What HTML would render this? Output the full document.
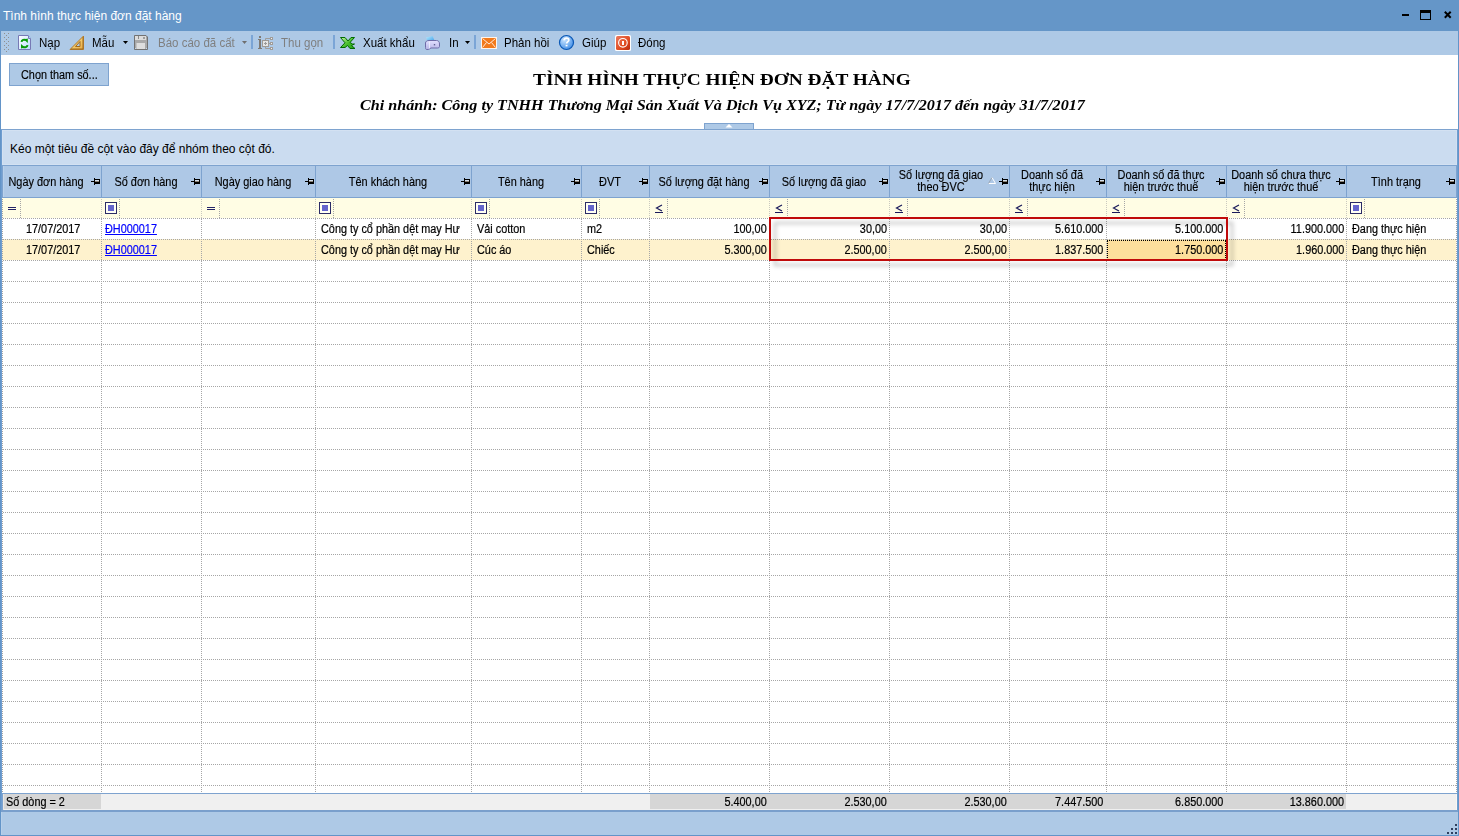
<!DOCTYPE html>
<html><head><meta charset="utf-8"><style>
*{margin:0;padding:0;box-sizing:border-box}
html,body{width:1459px;height:836px;overflow:hidden;background:#fff;font-family:"Liberation Sans",sans-serif;color:#000}
.ab{position:absolute}
.t{position:absolute;white-space:nowrap;line-height:1}
.hd{position:absolute;top:5px;height:0}
.dh{position:absolute;height:1px;background:repeating-linear-gradient(90deg,transparent 0 1px,#a6a6a6 1px 2px)}
.dv{position:absolute;width:1px;background:repeating-linear-gradient(180deg,transparent 0 1px,#a6a6a6 1px 2px)}
</style></head><body>

<div class="ab" style="left:0;top:0;width:1459px;height:31px;background:#6596c8"></div>
<div class="t" style="left:3px;top:10px;font-size:12px;color:#fff">Tình hình thực hiện đơn đặt hàng</div>
<div class="ab" style="left:1402px;top:14px;width:7px;height:2px;background:#000"></div>
<div class="ab" style="left:1420px;top:10px;width:11px;height:10px;border:1px solid #000;border-top-width:3px"></div>
<svg class="ab" style="left:1443px;top:10px" width="10" height="10" viewBox="0 0 10 10"><path d="M1.8 1.8L7.7 7.7M7.7 1.8L1.8 7.7" stroke="#000" stroke-width="2"/></svg>
<div class="ab" style="left:0;top:31px;width:1px;height:805px;background:#6394c8"></div>
<div class="ab" style="left:1458px;top:31px;width:1px;height:805px;background:#6394c8"></div>
<div class="ab" style="left:1px;top:31px;width:1457px;height:24px;background:#aec9e6"></div>
<svg class="ab" style="left:0;top:0" width="12" height="56"><rect x="4" y="33" width="1" height="1" fill="#8f8f8f"/><rect x="8" y="33" width="1" height="1" fill="#8f8f8f"/><rect x="6" y="35" width="1" height="1" fill="#8f8f8f"/><rect x="4" y="37" width="1" height="1" fill="#8f8f8f"/><rect x="8" y="37" width="1" height="1" fill="#8f8f8f"/><rect x="6" y="39" width="1" height="1" fill="#8f8f8f"/><rect x="4" y="41" width="1" height="1" fill="#8f8f8f"/><rect x="8" y="41" width="1" height="1" fill="#8f8f8f"/><rect x="6" y="43" width="1" height="1" fill="#8f8f8f"/><rect x="4" y="45" width="1" height="1" fill="#8f8f8f"/><rect x="8" y="45" width="1" height="1" fill="#8f8f8f"/><rect x="6" y="47" width="1" height="1" fill="#8f8f8f"/><rect x="4" y="49" width="1" height="1" fill="#8f8f8f"/><rect x="8" y="49" width="1" height="1" fill="#8f8f8f"/><rect x="6" y="51" width="1" height="1" fill="#8f8f8f"/></svg>
<div class="t" style="left:39px;top:37px;font-size:12.5px;color:#000;transform-origin:0 0;transform:scaleX(0.92)">Nạp</div>
<div class="t" style="left:92px;top:37px;font-size:12.5px;color:#000;transform-origin:0 0;transform:scaleX(0.92)">Mẫu</div>
<div class="t" style="left:158px;top:37px;font-size:12.5px;color:#7f7f7f;transform-origin:0 0;transform:scaleX(0.92)">Báo cáo đã cất</div>
<div class="t" style="left:281px;top:37px;font-size:12.5px;color:#7f7f7f;transform-origin:0 0;transform:scaleX(0.92)">Thu gọn</div>
<div class="t" style="left:363px;top:37px;font-size:12.5px;color:#000;transform-origin:0 0;transform:scaleX(0.92)">Xuất khẩu</div>
<div class="t" style="left:448.5px;top:37px;font-size:12.5px;color:#000;transform-origin:0 0;transform:scaleX(0.92)">In</div>
<div class="t" style="left:504px;top:37px;font-size:12.5px;color:#000;transform-origin:0 0;transform:scaleX(0.92)">Phản hồi</div>
<div class="t" style="left:582px;top:37px;font-size:12.5px;color:#000;transform-origin:0 0;transform:scaleX(0.92)">Giúp</div>
<div class="t" style="left:638px;top:37px;font-size:12.5px;color:#000;transform-origin:0 0;transform:scaleX(0.92)">Đóng</div>
<svg class="ab" style="left:123px;top:41px" width="5" height="3"><path d="M0 0H5L2.5 3Z" fill="#000"/></svg>
<svg class="ab" style="left:242px;top:41px" width="5" height="3"><path d="M0 0H5L2.5 3Z" fill="#6f6f6f"/></svg>
<svg class="ab" style="left:465px;top:41px" width="5" height="3"><path d="M0 0H5L2.5 3Z" fill="#000"/></svg>
<div class="ab" style="left:251px;top:35px;width:2px;height:14px;background:#7ba5d6"></div>
<div class="ab" style="left:333px;top:35px;width:2px;height:14px;background:#7ba5d6"></div>
<div class="ab" style="left:474px;top:35px;width:2px;height:14px;background:#7ba5d6"></div>
<svg class="ab" style="left:15px;top:33px" width="20" height="20" viewBox="0 0 20 20"><defs><linearGradient id="dg" x1="0" y1="0" x2="1" y2="1"><stop offset="0" stop-color="#ffffff"/><stop offset="1" stop-color="#b8dcff"/></linearGradient></defs>
<path d="M3.5 2.5H13.5V5.5H15.5V16.5H3.5Z" fill="url(#dg)" stroke="#7779b5"/><path d="M13.5 2.5L15.5 4.5" stroke="#8ab4e8"/>
<path d="M6.5 8.8C6.8 6.8 9 6.2 11 7" stroke="#089a08" stroke-width="2" fill="none"/><path d="M9 6.5L12.8 5.6L12.8 10Z" fill="#089a08"/>
<path d="M12.5 12.2C12.2 14.2 10 14.8 8 14" stroke="#089a08" stroke-width="2" fill="none"/><path d="M10 14.5L6 15.6L6 11Z" fill="#089a08"/></svg>
<svg class="ab" style="left:66px;top:33px" width="20" height="20" viewBox="0 0 20 20"><defs><linearGradient id="rg" x1="0" y1="0" x2="1" y2="1"><stop offset="0" stop-color="#fff2a0"/><stop offset="1" stop-color="#e8a840"/></linearGradient></defs>
<path d="M17.5 3L17.5 16.5L4 16.5Z" fill="url(#rg)" stroke="#b37a2a"/><path d="M14 8.5L14 13.5L9.5 13.5Z" fill="#aec9e6" stroke="#a06a20"/>
<path d="M6 16.5V15M8 16.5V15M10 16.5V15M12 16.5V15M14 16.5V15M16 16.5V15M17.5 15H16M17.5 13H16M17.5 11H16M17.5 9H16M17.5 7H16M17.5 5H16" stroke="#9c6a20" stroke-width="1"/></svg>
<svg class="ab" style="left:131px;top:33px" width="20" height="20" viewBox="0 0 20 20"><path d="M3.5 2.5H15L16.5 4V16.5H3.5Z" fill="#a9a9a9" stroke="#727272"/><rect x="4" y="3" width="11" height="4" fill="#dcdcdc"/><rect x="7" y="3" width="1" height="3" fill="#8a8a8a"/><circle cx="13" cy="5" r="1" fill="#8a8a8a"/>
<rect x="5.5" y="10" width="8.5" height="6" fill="#dedede"/><rect x="4" y="15" width="1" height="1" fill="#c0d8f0"/><rect x="15" y="15" width="1" height="1" fill="#c0d8f0"/></svg>
<svg class="ab" style="left:255px;top:33px" width="20" height="20" viewBox="0 0 20 20"><rect x="4" y="3" width="2" height="2" fill="#7f7a74"/><rect x="3" y="6" width="3" height="1" fill="#7f7a74"/><rect x="4" y="6" width="2" height="10" fill="#7f7a74"/><rect x="3" y="15" width="4" height="1" fill="#7f7a74"/>
<rect x="7.5" y="7.5" width="6" height="6" fill="#e6e6e6" stroke="#9e9a96"/><path d="M9 10.5H12M10.5 9V12" stroke="#9a9a9a"/>
<path d="M10.5 7V5.5H15.5M13.5 10.5H15.5M10.5 14V15.5H15.5" stroke="#a09c98" fill="none"/>
<rect x="15.5" y="4.5" width="2" height="2" fill="#eee" stroke="#a09c98"/><rect x="15.5" y="9.5" width="2" height="2" fill="#eee" stroke="#a09c98"/><rect x="15.5" y="14.5" width="2" height="2" fill="#eee" stroke="#a09c98"/></svg>
<svg class="ab" style="left:337px;top:33px" width="20" height="20" viewBox="0 0 20 20"><defs><linearGradient id="xg" x1="0" y1="0" x2="1" y2="1"><stop offset="0" stop-color="#c8f5a8"/><stop offset="0.5" stop-color="#4cc030"/><stop offset="1" stop-color="#1a9a10"/></linearGradient></defs>
<path d="M3.5 4.5H8L11 8L14 4.5H17.5L13 9.5L15.5 11H17.5L14.5 12.5L18 15.5H13L10.5 12.5L8 14.5H3.5L8 9.8Z" fill="url(#xg)" stroke="#006a00" stroke-width="1"/></svg>
<svg class="ab" style="left:422px;top:33px" width="20" height="20" viewBox="0 0 20 20"><defs><linearGradient id="pg" x1="0" y1="0" x2="1" y2="1"><stop offset="0" stop-color="#b8ecff"/><stop offset="1" stop-color="#3c9ce8"/></linearGradient><linearGradient id="bg2" x1="0" y1="0" x2="0" y2="1"><stop offset="0" stop-color="#e2e0ff"/><stop offset="1" stop-color="#b6b4e6"/></linearGradient></defs>
<path d="M4 4.5L10.5 3L12.5 7.5L5.5 8.5Z" fill="url(#pg)"/>
<path d="M3.5 10C3.5 8.5 5 7.5 7 7.5H14.5C16.5 7.5 17.5 9 17.5 11V13.5C17.5 14.5 16.5 15 15.5 15H9L6.5 16.5H4.5C3.8 16.5 3.5 15.5 3.5 14.5Z" fill="url(#bg2)" stroke="#6e6ca8"/>
<path d="M7.5 8.5V15.5" stroke="#f0f0ff" stroke-width="0.8"/><rect x="11.8" y="11" width="1.4" height="1.4" fill="#606090"/></svg>
<svg class="ab" style="left:479px;top:33px" width="20" height="20" viewBox="0 0 20 20"><rect x="2" y="4" width="16" height="12" fill="#fff4ea"/><rect x="3" y="5" width="14" height="10" fill="#f27a1c"/>
<path d="M3.5 5.5L10 11L16.5 5.5M3.5 14.5L7.5 9.5M16.5 14.5L12.5 9.5" stroke="#ffe8d8" stroke-width="1" fill="none"/></svg>
<svg class="ab" style="left:556px;top:32px" width="20" height="20" viewBox="0 0 20 20"><defs><radialGradient id="hg" cx="0.35" cy="0.3" r="0.8"><stop offset="0" stop-color="#c8e4ff"/><stop offset="1" stop-color="#3a8ae6"/></radialGradient></defs>
<circle cx="10.5" cy="10.5" r="7" fill="url(#hg)" stroke="#0a58b5" stroke-width="1.2"/>
<path d="M8.2 8.3C8.2 6.8 9.3 6.2 10.5 6.2C11.8 6.2 12.8 7 12.8 8.2C12.8 9.6 10.8 9.8 10.6 11.5" stroke="#fff" stroke-width="1.7" fill="none"/><rect x="9.6" y="12.8" width="1.9" height="1.6" fill="#fff"/></svg>
<svg class="ab" style="left:612px;top:33px" width="20" height="20" viewBox="0 0 20 20"><defs><linearGradient id="cg" x1="0" y1="0" x2="1" y2="1"><stop offset="0" stop-color="#ea7a60"/><stop offset="0.6" stop-color="#e04a20"/><stop offset="1" stop-color="#b82a10"/></linearGradient></defs>
<rect x="3" y="2" width="16" height="16" rx="1.5" fill="#ffffff"/><rect x="4" y="3" width="14" height="14" rx="1.5" fill="url(#cg)"/>
<circle cx="10.9" cy="9.8" r="4.3" stroke="#fff" stroke-width="1.1" fill="none"/><rect x="10" y="8" width="2" height="4" fill="#fff"/></svg>
<div class="ab" style="left:9px;top:63px;width:100px;height:23px;background:#aec9e6;border:1px solid #7ea3cf"></div>
<div class="t" style="left:21px;top:69px;font-size:12px;transform-origin:0 0;transform:scaleX(0.905);-webkit-text-stroke:0.15px #000">Chọn tham số...</div>
<div class="t" style="left:533px;top:70.5px;font-size:17.5px;font-family:'Liberation Serif',serif;font-weight:bold;transform-origin:0 0;transform:scaleX(1.105)">TÌNH HÌNH THỰC HIỆN ĐƠN ĐẶT HÀNG</div>
<div class="t" style="left:360px;top:97px;font-size:15.5px;font-family:'Liberation Serif',serif;font-weight:bold;font-style:italic;transform-origin:0 0;transform:scaleX(1.04)">Chi nhánh: Công ty TNHH Thương Mại Sản Xuất Và Dịch Vụ XYZ; Từ ngày 17/7/2017 đến ngày 31/7/2017</div>
<div class="ab" style="left:704px;top:123px;width:50px;height:7px;background:#aec9e6;border:1px solid #7ea3cf"></div>
<svg class="ab" style="left:725px;top:124px" width="8" height="4"><path d="M0.5 3.5H7.5L4 0Z" fill="#fff"/></svg>
<div class="ab" style="left:1px;top:129px;width:1457px;height:1px;background:#7ea3cf"></div>
<div class="ab" style="left:1px;top:130px;width:1px;height:682px;background:#6f9dd0"></div>
<div class="ab" style="left:1457px;top:130px;width:1px;height:682px;background:#6f9dd0"></div>
<div class="ab" style="left:2px;top:130px;width:1455px;height:35px;background:#cbdcf0"></div>
<div class="ab" style="left:2px;top:130px;width:1455px;height:1px;background:#d3e1f2"></div>
<div class="ab" style="left:2px;top:164px;width:1455px;height:1px;background:#d3e1f2"></div>
<div class="ab" style="left:2px;top:130px;width:1px;height:35px;background:#d3e1f2"></div>
<div class="ab" style="left:1456px;top:130px;width:1px;height:35px;background:#d3e1f2"></div>
<div class="t" style="left:10px;top:143px;font-size:12px">Kéo một tiêu đề cột vào đây để nhóm theo cột đó.</div>
<div class="ab" style="left:2px;top:165px;width:1455px;height:33px;background:#aec8e6;border-top:1px solid #7ea3cf;border-bottom:1px solid #7ea3cf;border-left:1px solid #7ea3cf"></div>
<div class="ab" style="left:3px;top:166px;width:1px;height:31px;background:#b9d1eb"></div>
<div class="ab" style="left:101px;top:166px;width:1px;height:31px;background:#7ea3cf"></div>
<div class="t" style="left:-54.5px;width:200px;text-align:center;top:176px;font-size:12px;transform-origin:50% 0;transform:scaleX(0.91);-webkit-text-stroke:0.15px #000">Ngày đơn hàng</div>
<svg class="ab" style="left:91px;top:178px" width="9" height="7"><rect x="0" y="3" width="3" height="1" fill="#000"/><rect x="3" y="0" width="1" height="7" fill="#000"/><rect x="4" y="1" width="5" height="1" fill="#000"/><rect x="8" y="1" width="1" height="5" fill="#000"/><rect x="4" y="4" width="5" height="2" fill="#000"/><rect x="4" y="2" width="4" height="1" fill="#d4e0ee"/><rect x="4" y="3" width="4" height="1" fill="#8c8478"/></svg>
<div class="ab" style="left:201px;top:166px;width:1px;height:31px;background:#7ea3cf"></div>
<div class="t" style="left:45.5px;width:200px;text-align:center;top:176px;font-size:12px;transform-origin:50% 0;transform:scaleX(0.91);-webkit-text-stroke:0.15px #000">Số đơn hàng</div>
<svg class="ab" style="left:191px;top:178px" width="9" height="7"><rect x="0" y="3" width="3" height="1" fill="#000"/><rect x="3" y="0" width="1" height="7" fill="#000"/><rect x="4" y="1" width="5" height="1" fill="#000"/><rect x="8" y="1" width="1" height="5" fill="#000"/><rect x="4" y="4" width="5" height="2" fill="#000"/><rect x="4" y="2" width="4" height="1" fill="#d4e0ee"/><rect x="4" y="3" width="4" height="1" fill="#8c8478"/></svg>
<div class="ab" style="left:315px;top:166px;width:1px;height:31px;background:#7ea3cf"></div>
<div class="t" style="left:152.5px;width:200px;text-align:center;top:176px;font-size:12px;transform-origin:50% 0;transform:scaleX(0.91);-webkit-text-stroke:0.15px #000">Ngày giao hàng</div>
<svg class="ab" style="left:305px;top:178px" width="9" height="7"><rect x="0" y="3" width="3" height="1" fill="#000"/><rect x="3" y="0" width="1" height="7" fill="#000"/><rect x="4" y="1" width="5" height="1" fill="#000"/><rect x="8" y="1" width="1" height="5" fill="#000"/><rect x="4" y="4" width="5" height="2" fill="#000"/><rect x="4" y="2" width="4" height="1" fill="#d4e0ee"/><rect x="4" y="3" width="4" height="1" fill="#8c8478"/></svg>
<div class="ab" style="left:471px;top:166px;width:1px;height:31px;background:#7ea3cf"></div>
<div class="t" style="left:287.5px;width:200px;text-align:center;top:176px;font-size:12px;transform-origin:50% 0;transform:scaleX(0.91);-webkit-text-stroke:0.15px #000">Tên khách hàng</div>
<svg class="ab" style="left:461px;top:178px" width="9" height="7"><rect x="0" y="3" width="3" height="1" fill="#000"/><rect x="3" y="0" width="1" height="7" fill="#000"/><rect x="4" y="1" width="5" height="1" fill="#000"/><rect x="8" y="1" width="1" height="5" fill="#000"/><rect x="4" y="4" width="5" height="2" fill="#000"/><rect x="4" y="2" width="4" height="1" fill="#d4e0ee"/><rect x="4" y="3" width="4" height="1" fill="#8c8478"/></svg>
<div class="ab" style="left:581px;top:166px;width:1px;height:31px;background:#7ea3cf"></div>
<div class="t" style="left:420.5px;width:200px;text-align:center;top:176px;font-size:12px;transform-origin:50% 0;transform:scaleX(0.91);-webkit-text-stroke:0.15px #000">Tên hàng</div>
<svg class="ab" style="left:571px;top:178px" width="9" height="7"><rect x="0" y="3" width="3" height="1" fill="#000"/><rect x="3" y="0" width="1" height="7" fill="#000"/><rect x="4" y="1" width="5" height="1" fill="#000"/><rect x="8" y="1" width="1" height="5" fill="#000"/><rect x="4" y="4" width="5" height="2" fill="#000"/><rect x="4" y="2" width="4" height="1" fill="#d4e0ee"/><rect x="4" y="3" width="4" height="1" fill="#8c8478"/></svg>
<div class="ab" style="left:649px;top:166px;width:1px;height:31px;background:#7ea3cf"></div>
<div class="t" style="left:509.5px;width:200px;text-align:center;top:176px;font-size:12px;transform-origin:50% 0;transform:scaleX(0.91);-webkit-text-stroke:0.15px #000">ĐVT</div>
<svg class="ab" style="left:639px;top:178px" width="9" height="7"><rect x="0" y="3" width="3" height="1" fill="#000"/><rect x="3" y="0" width="1" height="7" fill="#000"/><rect x="4" y="1" width="5" height="1" fill="#000"/><rect x="8" y="1" width="1" height="5" fill="#000"/><rect x="4" y="4" width="5" height="2" fill="#000"/><rect x="4" y="2" width="4" height="1" fill="#d4e0ee"/><rect x="4" y="3" width="4" height="1" fill="#8c8478"/></svg>
<div class="ab" style="left:769px;top:166px;width:1px;height:31px;background:#7ea3cf"></div>
<div class="t" style="left:603.5px;width:200px;text-align:center;top:176px;font-size:12px;transform-origin:50% 0;transform:scaleX(0.91);-webkit-text-stroke:0.15px #000">Số lượng đặt hàng</div>
<svg class="ab" style="left:759px;top:178px" width="9" height="7"><rect x="0" y="3" width="3" height="1" fill="#000"/><rect x="3" y="0" width="1" height="7" fill="#000"/><rect x="4" y="1" width="5" height="1" fill="#000"/><rect x="8" y="1" width="1" height="5" fill="#000"/><rect x="4" y="4" width="5" height="2" fill="#000"/><rect x="4" y="2" width="4" height="1" fill="#d4e0ee"/><rect x="4" y="3" width="4" height="1" fill="#8c8478"/></svg>
<div class="ab" style="left:889px;top:166px;width:1px;height:31px;background:#7ea3cf"></div>
<div class="t" style="left:723.5px;width:200px;text-align:center;top:176px;font-size:12px;transform-origin:50% 0;transform:scaleX(0.91);-webkit-text-stroke:0.15px #000">Số lượng đã giao</div>
<svg class="ab" style="left:879px;top:178px" width="9" height="7"><rect x="0" y="3" width="3" height="1" fill="#000"/><rect x="3" y="0" width="1" height="7" fill="#000"/><rect x="4" y="1" width="5" height="1" fill="#000"/><rect x="8" y="1" width="1" height="5" fill="#000"/><rect x="4" y="4" width="5" height="2" fill="#000"/><rect x="4" y="2" width="4" height="1" fill="#d4e0ee"/><rect x="4" y="3" width="4" height="1" fill="#8c8478"/></svg>
<div class="ab" style="left:1009px;top:166px;width:1px;height:31px;background:#7ea3cf"></div>
<div class="t" style="left:840.5px;width:200px;text-align:center;top:170px;font-size:12px;line-height:11.5px;transform-origin:50% 0;transform:scaleX(0.91);-webkit-text-stroke:0.15px #000">Số lượng đã giao<br>theo ĐVC</div>
<svg class="ab" style="left:999px;top:178px" width="9" height="7"><rect x="0" y="3" width="3" height="1" fill="#000"/><rect x="3" y="0" width="1" height="7" fill="#000"/><rect x="4" y="1" width="5" height="1" fill="#000"/><rect x="8" y="1" width="1" height="5" fill="#000"/><rect x="4" y="4" width="5" height="2" fill="#000"/><rect x="4" y="2" width="4" height="1" fill="#d4e0ee"/><rect x="4" y="3" width="4" height="1" fill="#8c8478"/></svg>
<div class="ab" style="left:1106px;top:166px;width:1px;height:31px;background:#7ea3cf"></div>
<div class="t" style="left:952.0px;width:200px;text-align:center;top:170px;font-size:12px;line-height:11.5px;transform-origin:50% 0;transform:scaleX(0.91);-webkit-text-stroke:0.15px #000">Doanh số đã<br>thực hiện</div>
<svg class="ab" style="left:1096px;top:178px" width="9" height="7"><rect x="0" y="3" width="3" height="1" fill="#000"/><rect x="3" y="0" width="1" height="7" fill="#000"/><rect x="4" y="1" width="5" height="1" fill="#000"/><rect x="8" y="1" width="1" height="5" fill="#000"/><rect x="4" y="4" width="5" height="2" fill="#000"/><rect x="4" y="2" width="4" height="1" fill="#d4e0ee"/><rect x="4" y="3" width="4" height="1" fill="#8c8478"/></svg>
<div class="ab" style="left:1226px;top:166px;width:1px;height:31px;background:#7ea3cf"></div>
<div class="t" style="left:1060.5px;width:200px;text-align:center;top:170px;font-size:12px;line-height:11.5px;transform-origin:50% 0;transform:scaleX(0.91);-webkit-text-stroke:0.15px #000">Doanh số đã thực<br>hiện trước thuế</div>
<svg class="ab" style="left:1216px;top:178px" width="9" height="7"><rect x="0" y="3" width="3" height="1" fill="#000"/><rect x="3" y="0" width="1" height="7" fill="#000"/><rect x="4" y="1" width="5" height="1" fill="#000"/><rect x="8" y="1" width="1" height="5" fill="#000"/><rect x="4" y="4" width="5" height="2" fill="#000"/><rect x="4" y="2" width="4" height="1" fill="#d4e0ee"/><rect x="4" y="3" width="4" height="1" fill="#8c8478"/></svg>
<div class="ab" style="left:1346px;top:166px;width:1px;height:31px;background:#7ea3cf"></div>
<div class="t" style="left:1180.5px;width:200px;text-align:center;top:170px;font-size:12px;line-height:11.5px;transform-origin:50% 0;transform:scaleX(0.91);-webkit-text-stroke:0.15px #000">Doanh số chưa thực<br>hiện trước thuế</div>
<svg class="ab" style="left:1336px;top:178px" width="9" height="7"><rect x="0" y="3" width="3" height="1" fill="#000"/><rect x="3" y="0" width="1" height="7" fill="#000"/><rect x="4" y="1" width="5" height="1" fill="#000"/><rect x="8" y="1" width="1" height="5" fill="#000"/><rect x="4" y="4" width="5" height="2" fill="#000"/><rect x="4" y="2" width="4" height="1" fill="#d4e0ee"/><rect x="4" y="3" width="4" height="1" fill="#8c8478"/></svg>
<div class="ab" style="left:1456px;top:166px;width:1px;height:31px;background:#7ea3cf"></div>
<div class="t" style="left:1295.5px;width:200px;text-align:center;top:176px;font-size:12px;transform-origin:50% 0;transform:scaleX(0.91);-webkit-text-stroke:0.15px #000">Tình trạng</div>
<svg class="ab" style="left:1446px;top:178px" width="9" height="7"><rect x="0" y="3" width="3" height="1" fill="#000"/><rect x="3" y="0" width="1" height="7" fill="#000"/><rect x="4" y="1" width="5" height="1" fill="#000"/><rect x="8" y="1" width="1" height="5" fill="#000"/><rect x="4" y="4" width="5" height="2" fill="#000"/><rect x="4" y="2" width="4" height="1" fill="#d4e0ee"/><rect x="4" y="3" width="4" height="1" fill="#8c8478"/></svg>
<svg class="ab" style="left:988px;top:177px" width="9" height="7"><path d="M4 0.5L7.5 6.5H0.5" fill="none" stroke="#fff"/><path d="M4 0.5L0.5 6.5" fill="none" stroke="#9aa6b4"/></svg>
<div class="ab" style="left:2px;top:198px;width:1454px;height:20px;background:#fffde4"></div>
<div class="dv" style="left:20px;top:198px;height:20px"></div>
<div class="ab" style="left:8px;top:207px;width:8px;height:1px;background:#232366"></div><div class="ab" style="left:8px;top:209px;width:8px;height:1px;background:#232366"></div>
<div class="dv" style="left:101px;top:198px;height:20px;opacity:.6"></div>
<div class="dv" style="left:119px;top:198px;height:20px"></div>
<div class="ab" style="left:105px;top:202px;width:12px;height:12px;border:1px solid #2b2b66;background:#fffff4"></div><div class="ab" style="left:108px;top:205px;width:6px;height:6px;background:#6565cc"></div>
<div class="dv" style="left:201px;top:198px;height:20px;opacity:.6"></div>
<div class="dv" style="left:219px;top:198px;height:20px"></div>
<div class="ab" style="left:207px;top:207px;width:8px;height:1px;background:#232366"></div><div class="ab" style="left:207px;top:209px;width:8px;height:1px;background:#232366"></div>
<div class="dv" style="left:315px;top:198px;height:20px;opacity:.6"></div>
<div class="dv" style="left:333px;top:198px;height:20px"></div>
<div class="ab" style="left:319px;top:202px;width:12px;height:12px;border:1px solid #2b2b66;background:#fffff4"></div><div class="ab" style="left:322px;top:205px;width:6px;height:6px;background:#6565cc"></div>
<div class="dv" style="left:471px;top:198px;height:20px;opacity:.6"></div>
<div class="dv" style="left:489px;top:198px;height:20px"></div>
<div class="ab" style="left:475px;top:202px;width:12px;height:12px;border:1px solid #2b2b66;background:#fffff4"></div><div class="ab" style="left:478px;top:205px;width:6px;height:6px;background:#6565cc"></div>
<div class="dv" style="left:581px;top:198px;height:20px;opacity:.6"></div>
<div class="dv" style="left:599px;top:198px;height:20px"></div>
<div class="ab" style="left:585px;top:202px;width:12px;height:12px;border:1px solid #2b2b66;background:#fffff4"></div><div class="ab" style="left:588px;top:205px;width:6px;height:6px;background:#6565cc"></div>
<div class="dv" style="left:649px;top:198px;height:20px;opacity:.6"></div>
<div class="dv" style="left:667px;top:198px;height:20px"></div>
<svg class="ab" style="left:655px;top:204px" width="9" height="10"><path d="M7 1L1.5 4L7 7" stroke="#1a1a5a" stroke-width="1.2" fill="none"/><rect x="0" y="8" width="8" height="1" fill="#1a1a5a"/></svg>
<div class="dv" style="left:769px;top:198px;height:20px;opacity:.6"></div>
<div class="dv" style="left:787px;top:198px;height:20px"></div>
<svg class="ab" style="left:775px;top:204px" width="9" height="10"><path d="M7 1L1.5 4L7 7" stroke="#1a1a5a" stroke-width="1.2" fill="none"/><rect x="0" y="8" width="8" height="1" fill="#1a1a5a"/></svg>
<div class="dv" style="left:889px;top:198px;height:20px;opacity:.6"></div>
<div class="dv" style="left:907px;top:198px;height:20px"></div>
<svg class="ab" style="left:895px;top:204px" width="9" height="10"><path d="M7 1L1.5 4L7 7" stroke="#1a1a5a" stroke-width="1.2" fill="none"/><rect x="0" y="8" width="8" height="1" fill="#1a1a5a"/></svg>
<div class="dv" style="left:1009px;top:198px;height:20px;opacity:.6"></div>
<div class="dv" style="left:1027px;top:198px;height:20px"></div>
<svg class="ab" style="left:1015px;top:204px" width="9" height="10"><path d="M7 1L1.5 4L7 7" stroke="#1a1a5a" stroke-width="1.2" fill="none"/><rect x="0" y="8" width="8" height="1" fill="#1a1a5a"/></svg>
<div class="dv" style="left:1106px;top:198px;height:20px;opacity:.6"></div>
<div class="dv" style="left:1124px;top:198px;height:20px"></div>
<svg class="ab" style="left:1112px;top:204px" width="9" height="10"><path d="M7 1L1.5 4L7 7" stroke="#1a1a5a" stroke-width="1.2" fill="none"/><rect x="0" y="8" width="8" height="1" fill="#1a1a5a"/></svg>
<div class="dv" style="left:1226px;top:198px;height:20px;opacity:.6"></div>
<div class="dv" style="left:1244px;top:198px;height:20px"></div>
<svg class="ab" style="left:1232px;top:204px" width="9" height="10"><path d="M7 1L1.5 4L7 7" stroke="#1a1a5a" stroke-width="1.2" fill="none"/><rect x="0" y="8" width="8" height="1" fill="#1a1a5a"/></svg>
<div class="dv" style="left:1346px;top:198px;height:20px;opacity:.6"></div>
<div class="dv" style="left:1364px;top:198px;height:20px"></div>
<div class="ab" style="left:1350px;top:202px;width:12px;height:12px;border:1px solid #2b2b66;background:#fffff4"></div><div class="ab" style="left:1353px;top:205px;width:6px;height:6px;background:#6565cc"></div>
<div class="ab" style="left:2px;top:239px;width:1454px;height:21px;background:#fef2cd"></div>
<div class="dv" style="left:2px;top:198px;height:595px"></div>
<div class="dv" style="left:1456px;top:198px;height:595px"></div>
<div class="dh" style="left:2px;top:218px;width:1454px"></div>
<div class="dh" style="left:2px;top:239px;width:1454px"></div>
<div class="dh" style="left:2px;top:260px;width:1454px"></div>
<div class="dh" style="left:2px;top:281px;width:1454px"></div>
<div class="dh" style="left:2px;top:302px;width:1454px"></div>
<div class="dh" style="left:2px;top:323px;width:1454px"></div>
<div class="dh" style="left:2px;top:344px;width:1454px"></div>
<div class="dh" style="left:2px;top:365px;width:1454px"></div>
<div class="dh" style="left:2px;top:386px;width:1454px"></div>
<div class="dh" style="left:2px;top:407px;width:1454px"></div>
<div class="dh" style="left:2px;top:428px;width:1454px"></div>
<div class="dh" style="left:2px;top:449px;width:1454px"></div>
<div class="dh" style="left:2px;top:470px;width:1454px"></div>
<div class="dh" style="left:2px;top:491px;width:1454px"></div>
<div class="dh" style="left:2px;top:512px;width:1454px"></div>
<div class="dh" style="left:2px;top:533px;width:1454px"></div>
<div class="dh" style="left:2px;top:554px;width:1454px"></div>
<div class="dh" style="left:2px;top:575px;width:1454px"></div>
<div class="dh" style="left:2px;top:596px;width:1454px"></div>
<div class="dh" style="left:2px;top:617px;width:1454px"></div>
<div class="dh" style="left:2px;top:638px;width:1454px"></div>
<div class="dh" style="left:2px;top:659px;width:1454px"></div>
<div class="dh" style="left:2px;top:680px;width:1454px"></div>
<div class="dh" style="left:2px;top:701px;width:1454px"></div>
<div class="dh" style="left:2px;top:722px;width:1454px"></div>
<div class="dh" style="left:2px;top:743px;width:1454px"></div>
<div class="dh" style="left:2px;top:764px;width:1454px"></div>
<div class="dh" style="left:2px;top:785px;width:1454px"></div>
<div class="dv" style="left:101px;top:218px;height:575px"></div>
<div class="dv" style="left:201px;top:218px;height:575px"></div>
<div class="dv" style="left:315px;top:218px;height:575px"></div>
<div class="dv" style="left:471px;top:218px;height:575px"></div>
<div class="dv" style="left:581px;top:218px;height:575px"></div>
<div class="dv" style="left:649px;top:218px;height:575px"></div>
<div class="dv" style="left:769px;top:218px;height:575px"></div>
<div class="dv" style="left:889px;top:218px;height:575px"></div>
<div class="dv" style="left:1009px;top:218px;height:575px"></div>
<div class="dv" style="left:1106px;top:218px;height:575px"></div>
<div class="dv" style="left:1226px;top:218px;height:575px"></div>
<div class="dv" style="left:1346px;top:218px;height:575px"></div>
<div class="ab" style="left:1107px;top:240px;width:119px;height:20px;background:#fddf9c;border:1px dotted #000"></div>
<div class="t" style="left:26px;top:223px;font-size:12px;color:#000;transform-origin:0 0;transform:scaleX(0.905);-webkit-text-stroke:0.2px #000;">17/07/2017</div>
<div class="t" style="left:105px;top:223px;font-size:12px;color:#0000ff;transform-origin:0 0;transform:scaleX(0.905);-webkit-text-stroke:0.2px #0000ff;text-decoration:underline">ĐH000017</div>
<div class="t" style="left:321px;top:223px;font-size:12px;color:#000;transform-origin:0 0;transform:scaleX(0.905);-webkit-text-stroke:0.2px #000;">Công ty cổ phần dệt may Hư</div>
<div class="t" style="left:477px;top:223px;font-size:12px;color:#000;transform-origin:0 0;transform:scaleX(0.905);-webkit-text-stroke:0.2px #000;">Vải cotton</div>
<div class="t" style="left:587px;top:223px;font-size:12px;color:#000;transform-origin:0 0;transform:scaleX(0.905);-webkit-text-stroke:0.2px #000;">m2</div>
<div class="t" style="right:692px;top:223px;font-size:12px;color:#000;transform-origin:100% 0;transform:scaleX(0.905);-webkit-text-stroke:0.2px #000;">100,00</div>
<div class="t" style="right:572px;top:223px;font-size:12px;color:#000;transform-origin:100% 0;transform:scaleX(0.905);-webkit-text-stroke:0.2px #000;">30,00</div>
<div class="t" style="right:452px;top:223px;font-size:12px;color:#000;transform-origin:100% 0;transform:scaleX(0.905);-webkit-text-stroke:0.2px #000;">30,00</div>
<div class="t" style="right:356px;top:223px;font-size:12px;color:#000;transform-origin:100% 0;transform:scaleX(0.905);-webkit-text-stroke:0.2px #000;">5.610.000</div>
<div class="t" style="right:236px;top:223px;font-size:12px;color:#000;transform-origin:100% 0;transform:scaleX(0.905);-webkit-text-stroke:0.2px #000;">5.100.000</div>
<div class="t" style="right:115px;top:223px;font-size:12px;color:#000;transform-origin:100% 0;transform:scaleX(0.905);-webkit-text-stroke:0.2px #000;">11.900.000</div>
<div class="t" style="left:1352px;top:223px;font-size:12px;color:#000;transform-origin:0 0;transform:scaleX(0.905);-webkit-text-stroke:0.2px #000;">Đang thực hiện</div>
<div class="t" style="left:26px;top:244px;font-size:12px;color:#000;transform-origin:0 0;transform:scaleX(0.905);-webkit-text-stroke:0.2px #000;">17/07/2017</div>
<div class="t" style="left:105px;top:244px;font-size:12px;color:#0000ff;transform-origin:0 0;transform:scaleX(0.905);-webkit-text-stroke:0.2px #0000ff;text-decoration:underline">ĐH000017</div>
<div class="t" style="left:321px;top:244px;font-size:12px;color:#000;transform-origin:0 0;transform:scaleX(0.905);-webkit-text-stroke:0.2px #000;">Công ty cổ phần dệt may Hư</div>
<div class="t" style="left:477px;top:244px;font-size:12px;color:#000;transform-origin:0 0;transform:scaleX(0.905);-webkit-text-stroke:0.2px #000;">Cúc áo</div>
<div class="t" style="left:587px;top:244px;font-size:12px;color:#000;transform-origin:0 0;transform:scaleX(0.905);-webkit-text-stroke:0.2px #000;">Chiếc</div>
<div class="t" style="right:692px;top:244px;font-size:12px;color:#000;transform-origin:100% 0;transform:scaleX(0.905);-webkit-text-stroke:0.2px #000;">5.300,00</div>
<div class="t" style="right:572px;top:244px;font-size:12px;color:#000;transform-origin:100% 0;transform:scaleX(0.905);-webkit-text-stroke:0.2px #000;">2.500,00</div>
<div class="t" style="right:452px;top:244px;font-size:12px;color:#000;transform-origin:100% 0;transform:scaleX(0.905);-webkit-text-stroke:0.2px #000;">2.500,00</div>
<div class="t" style="right:356px;top:244px;font-size:12px;color:#000;transform-origin:100% 0;transform:scaleX(0.905);-webkit-text-stroke:0.2px #000;">1.837.500</div>
<div class="t" style="right:236px;top:244px;font-size:12px;color:#000;transform-origin:100% 0;transform:scaleX(0.905);-webkit-text-stroke:0.2px #000;">1.750.000</div>
<div class="t" style="right:115px;top:244px;font-size:12px;color:#000;transform-origin:100% 0;transform:scaleX(0.905);-webkit-text-stroke:0.2px #000;">1.960.000</div>
<div class="t" style="left:1352px;top:244px;font-size:12px;color:#000;transform-origin:0 0;transform:scaleX(0.905);-webkit-text-stroke:0.2px #000;">Đang thực hiện</div>
<div class="ab" style="left:774px;top:222px;width:459px;height:44px;border:2.5px solid rgba(0,0,0,.28);filter:blur(2.2px)"></div>
<div class="ab" style="left:769px;top:217px;width:459px;height:44px;border:2px solid #c00a0a"></div>
<div class="ab" style="left:2px;top:793px;width:1455px;height:1px;background:#7ea3cf"></div>
<div class="ab" style="left:2px;top:794px;width:1455px;height:16px;background:#f0f0f0"></div>
<div class="ab" style="left:2px;top:794px;width:1px;height:16px;background:#7ea3cf"></div>
<div class="ab" style="left:3px;top:794px;width:1px;height:16px;background:#ebe7e2"></div>
<div class="ab" style="left:1456px;top:794px;width:1px;height:16px;background:#fbf8f2"></div>
<div class="ab" style="left:4px;top:794px;width:97px;height:15px;background:#d6d6d6"></div>
<div class="ab" style="left:650px;top:794px;width:696px;height:15px;background:#d6d6d6"></div>
<div class="t" style="left:6px;top:796px;font-size:12px;color:#000;transform-origin:0 0;transform:scaleX(0.905);-webkit-text-stroke:0.2px #000;">Số dòng = 2</div>
<div class="t" style="right:692px;top:796px;font-size:12px;color:#000;transform-origin:100% 0;transform:scaleX(0.905);-webkit-text-stroke:0.2px #000;">5.400,00</div>
<div class="t" style="right:572px;top:796px;font-size:12px;color:#000;transform-origin:100% 0;transform:scaleX(0.905);-webkit-text-stroke:0.2px #000;">2.530,00</div>
<div class="t" style="right:452px;top:796px;font-size:12px;color:#000;transform-origin:100% 0;transform:scaleX(0.905);-webkit-text-stroke:0.2px #000;">2.530,00</div>
<div class="t" style="right:356px;top:796px;font-size:12px;color:#000;transform-origin:100% 0;transform:scaleX(0.905);-webkit-text-stroke:0.2px #000;">7.447.500</div>
<div class="t" style="right:236px;top:796px;font-size:12px;color:#000;transform-origin:100% 0;transform:scaleX(0.905);-webkit-text-stroke:0.2px #000;">6.850.000</div>
<div class="t" style="right:115px;top:796px;font-size:12px;color:#000;transform-origin:100% 0;transform:scaleX(0.905);-webkit-text-stroke:0.2px #000;">13.860.000</div>
<div class="ab" style="left:1px;top:810px;width:1457px;height:2px;background:#7a9fcc"></div>
<div class="ab" style="left:1px;top:812px;width:1457px;height:23px;background:#aec9e6"></div>
<div class="ab" style="left:1px;top:812px;width:1px;height:23px;background:#b8d0ea"></div>
<div class="ab" style="left:0;top:835px;width:1459px;height:1px;background:#6394c8"></div>
<div class="ab" style="left:1455px;top:824px;width:2px;height:2px;background:#2f3f5f"></div>
<div class="ab" style="left:1451px;top:828px;width:2px;height:2px;background:#2f3f5f"></div>
<div class="ab" style="left:1455px;top:828px;width:2px;height:2px;background:#2f3f5f"></div>
<div class="ab" style="left:1447px;top:832px;width:2px;height:2px;background:#2f3f5f"></div>
<div class="ab" style="left:1451px;top:832px;width:2px;height:2px;background:#2f3f5f"></div>
<div class="ab" style="left:1455px;top:832px;width:2px;height:2px;background:#2f3f5f"></div>
</body></html>
